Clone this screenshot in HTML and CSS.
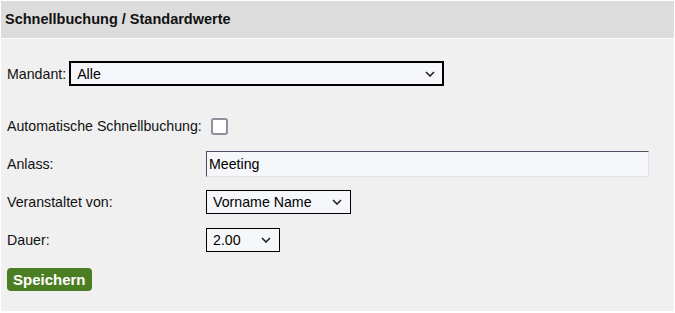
FILE: index.html
```html
<!DOCTYPE html>
<html lang="de">

<head>
    <meta charset="UTF-8">
    <meta name="viewport" content="width=device-width, initial-scale=1.0">
    <title>Schnellbuchung / Standardwerte</title>
    <link rel="stylesheet" href="styles.css">
</head>

<body>
    <div class="panel">
        <div class="panel-header">Schnellbuchung / Standardwerte</div>

        <div class="panel-body">
            <div class="mandant-row">
                <label for="mandant">Mandant:</label>
                <select id="mandant" class="mandant-select">
                    <option>Alle</option>
                </select>
            </div>

            <div class="form-grid">
                <label for="autoBooking">Automatische Schnellbuchung:</label>
                <div><input type="checkbox" id="autoBooking" class="check"></div>

                <label for="anlass">Anlass:</label>
                <div><input type="text" id="anlass" class="text-input" value="Meeting"></div>

                <label for="veranstalter">Veranstaltet von:</label>
                <div>
                    <select id="veranstalter" class="veranstalter-select">
                        <option>Vorname Name</option>
                    </select>
                </div>

                <label for="dauer">Dauer:</label>
                <div>
                    <select id="dauer" class="dauer-select">
                        <option>2.00</option>
                    </select>
                </div>
            </div>

            <button class="save-btn">Speichern</button>
        </div>
    </div>
</body>

</html>
```

FILE: styles.css
```css
body {
    margin: 0;
    font-family: "Liberation Sans", Arial, sans-serif;
    font-size: 14.2px;
    color: #111;
    background-color: #fff;
}

.panel {
    border: 1px solid #fff;
    background-color: #f0f0f0;
}

.panel-header {
    height: 37px;
    line-height: 37px;
    padding: 0 4px;
    background-color: #dcdcdc;
    border-bottom: 1px solid #fafafa;
    font-size: 14.5px;
    font-weight: bold;
    color: #111;
}

.panel-body {
    padding: 21px 6px 20px 6px;
}

.mandant-row {
    display: flex;
    align-items: center;
    gap: 3px;
    padding-top: 1px;
}

select {
    appearance: none;
    font-family: "Liberation Sans", Arial, sans-serif;
    font-size: 14.2px;
    color: #000;
    height: 25px;
    border: 1px solid #000;
    border-radius: 0;
    padding: 0 20px 0 6px;
    background-color: #f6f7fb;
    background-image: url("data:image/svg+xml;utf8,<svg xmlns='http://www.w3.org/2000/svg' width='10' height='6' viewBox='0 0 10 6'><path d='M1 1l4 4 4-4' fill='none' stroke='%23222' stroke-width='1.6'/></svg>");
    background-repeat: no-repeat;
    background-position: right 7px center;
}

.mandant-select {
    width: 375px;
    border-width: 2px;
    padding-left: 6px;
}

.veranstalter-select {
    width: 145px;
    height: 24px;
    padding-left: 6px;
    background-position: right 8px center;
}

.dauer-select {
    width: 74px;
    height: 24px;
    padding-left: 6px;
    background-position: right 8px center;
}

.form-grid {
    display: grid;
    grid-template-columns: 199px 1fr;
    grid-auto-rows: 38px;
    align-items: center;
    margin-top: 21px;
}

.form-grid > div {
    display: flex;
    align-items: center;
}

.check {
    appearance: none;
    width: 17px;
    height: 17px;
    margin: 0 0 0 5px;
    border: 2px solid #8f8f9d;
    border-radius: 3px;
    background-color: #fff;
}

.text-input {
    box-sizing: border-box;
    width: 443px;
    height: 26px;
    padding: 0 2px;
    font-family: "Liberation Sans", Arial, sans-serif;
    font-size: 14.2px;
    color: #000;
    background-color: #f6f7fb;
    border: 1px solid #e2e3e6;
    border-top-color: #4c5060;
    border-left-color: #4c5060;
}

.save-btn {
    margin-top: 9px;
    height: 23px;
    padding: 0 6px;
    font-family: "Liberation Sans", Arial, sans-serif;
    font-size: 15px;
    font-weight: bold;
    color: #fff;
    background-color: #4b7d22;
    border: none;
    border-radius: 4px;
    cursor: pointer;
}
```
